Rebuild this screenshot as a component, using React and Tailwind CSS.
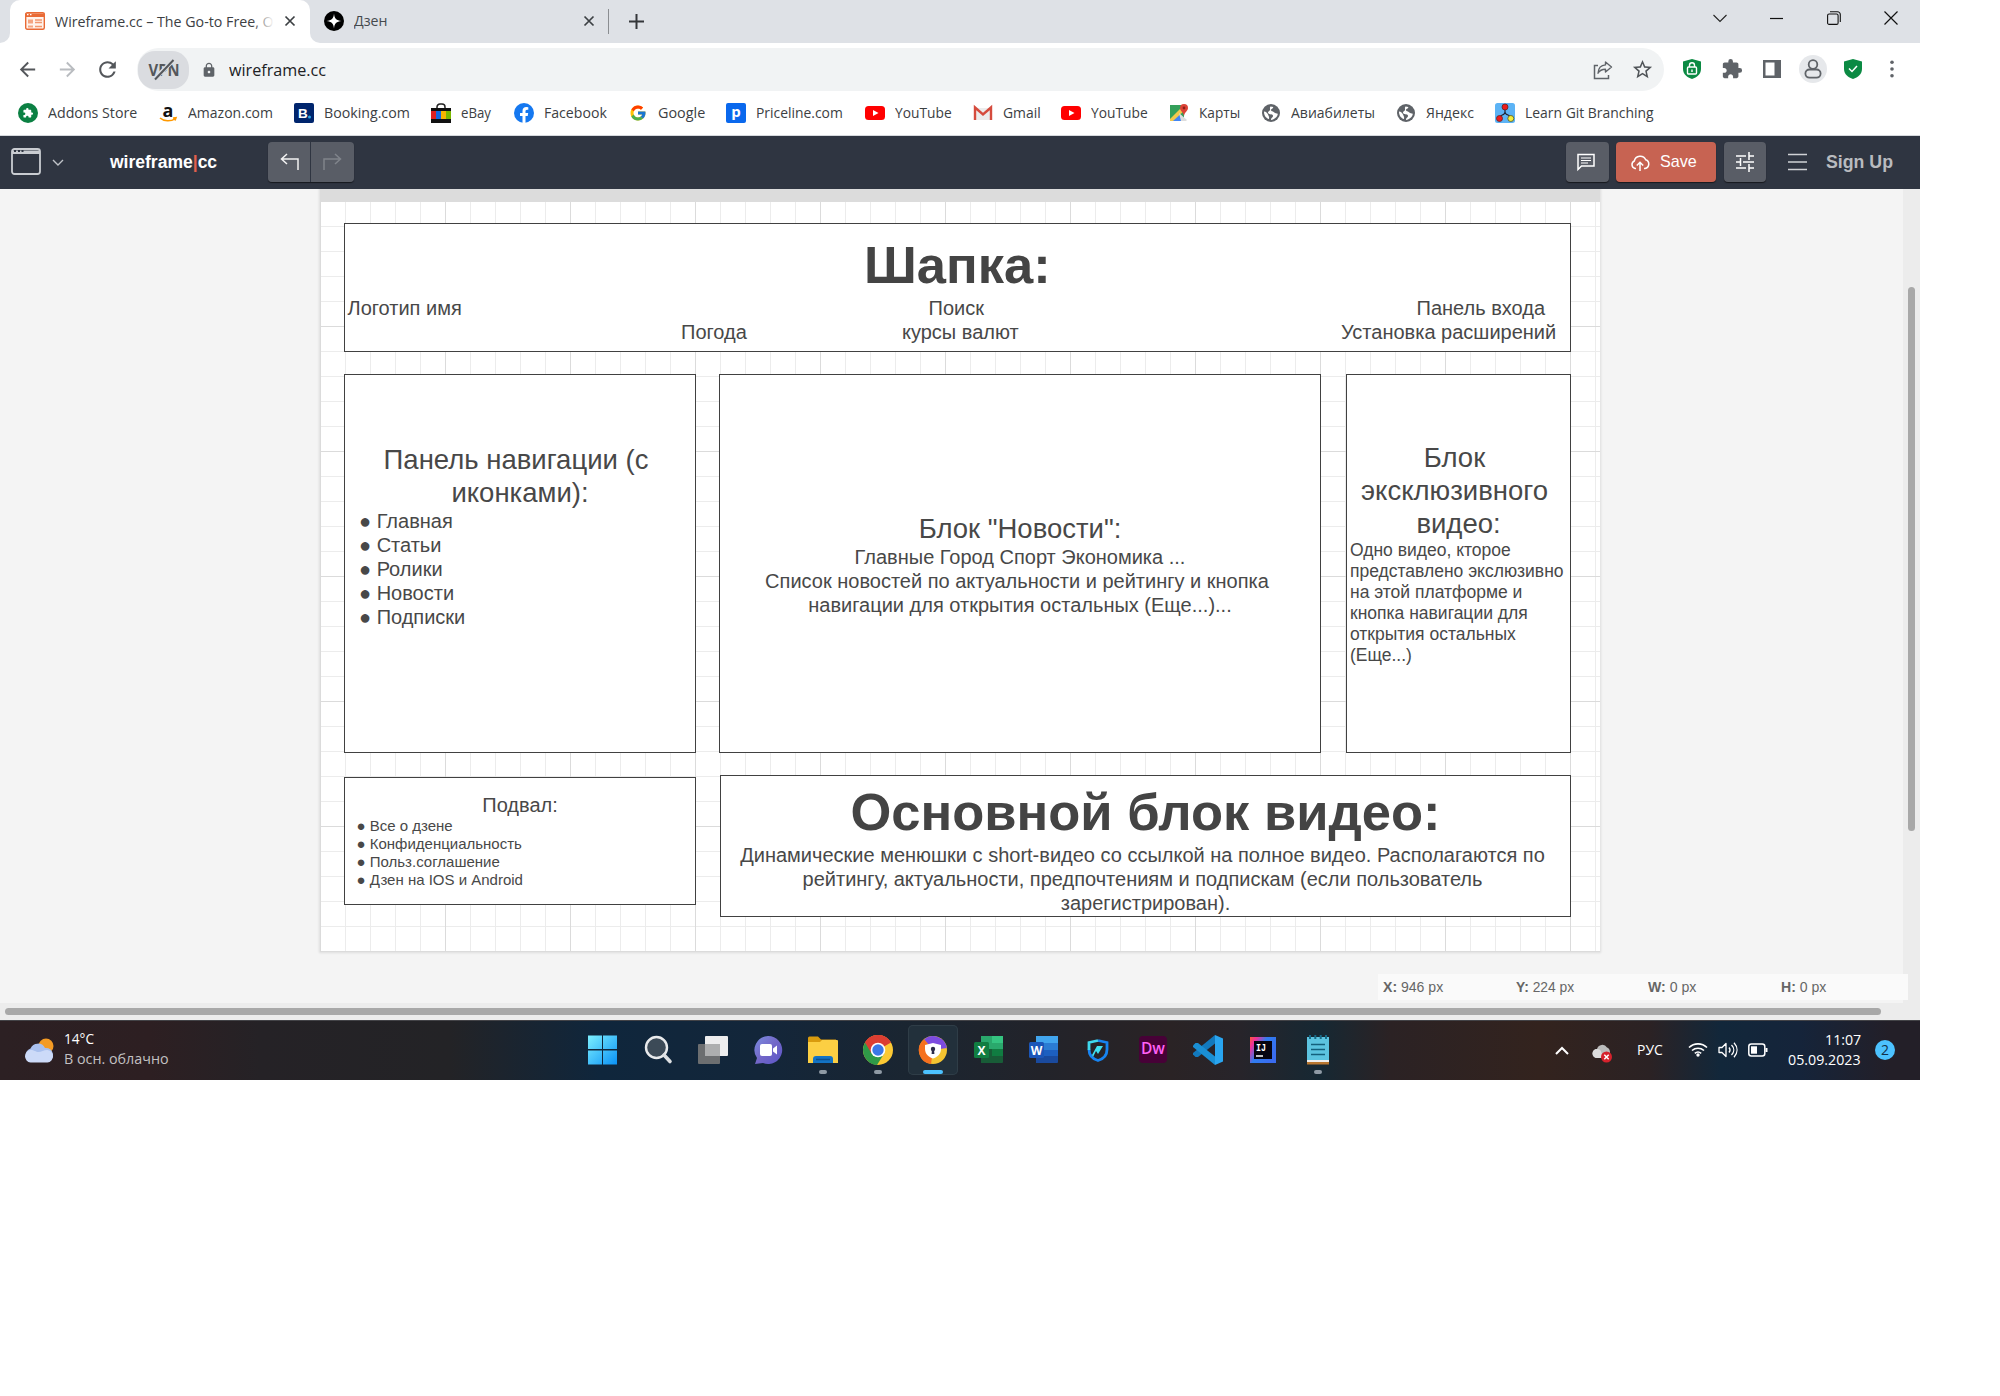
import React, { useLayoutEffect, useRef, useState } from "react";
import { FcGoogle } from "react-icons/fc";
import { MdExtension, MdLock, MdRefresh, MdStarBorder, MdArrowBack, MdArrowForward } from "react-icons/md";

function Fit({ w, className = "", children }) {
  const ref = useRef(null);
  const [scale, setScale] = useState(1);
  useLayoutEffect(() => {
    setScale(w / ref.current.offsetWidth);
  }, [w]);
  return (
    <span className={"block shrink-0 whitespace-nowrap " + className} style={{ width: w }}>
      <span ref={ref} className="inline-block origin-left" style={{ transform: `scaleX(${scale})` }}>
        {children}
      </span>
    </span>
  );
}

const Svg = ({ w = 20, h = 20, vb, className = "", children }) => (
  <svg width={w} height={h} viewBox={vb || `0 0 ${w} ${h}`} className={"block shrink-0 overflow-visible " + className} fill="none">
    {children}
  </svg>
);

const YouTube = () => (
  <Svg>
    <rect x="0" y="3" width="20" height="14" rx="3.5" fill="#f00" />
    <path d="M8 7l5.5 3L8 13z" fill="#fff" />
  </Svg>
);

const Globe = () => (
  <Svg>
    <circle cx="10" cy="10" r="9" fill="#5f6368" />
    <path d="M9.500 3.500c-1.500 2 .5 2.800-1 4.200S6.500 9 7.500 10.500s4.500.3 4.500 2.300-2 1.700-2 4.200C13.500 16.500 16.500 14 16.800 10.800 15.500 10 14.500 10.800 13 9.300s-2.500-.5-3-2 2.300-1.300 2.300-3.300z" fill="#fff" />
    <path d="M3 8.500c2 .2 3.500 1.500 4 3s1.500 2 1 4.500C5 15.500 2.800 12 3 8.500z" fill="#fff" />
  </Svg>
);

const bookmarks = [
  { w: 140, tw: 89, label: "Addons Store", icon: (
    <Svg><circle cx="10" cy="10" r="10" fill="#0b8043" /><g transform="translate(4.5 4.5) scale(.46)"><path d="M20.500 11H19V7c0-1.100-.9-2-2-2h-4V3.500a2.500 2.500 0 0 0-5 0V5H4c-1.100 0-2 .9-2 2v3.800h1.500a2.700 2.700 0 1 1 0 5.400H2V20c0 1.100.9 2 2 2h3.800v-1.500a2.700 2.700 0 1 1 5.400 0V22H17c1.100 0 2-.9 2-2v-4h1.500a2.500 2.500 0 0 0 0-5z" fill="#fff" /></g></Svg>) },
  { w: 136, tw: 85, label: "Amazon.com", icon: (
    <Svg><text x="10" y="13.500" textAnchor="middle" fontFamily="Open Sans" fontWeight="700" fontSize="18" fill="#111">a</text><path d="M2 15c4 3.600 11 3.600 15 .8M15 15l3-.3-1 2.800" stroke="#f90" strokeWidth="1.600" /></Svg>) },
  { w: 137, tw: 86, label: "Booking.com", icon: (
    <Svg><rect width="20" height="20" rx="2" fill="#00256d" /><text x="4" y="15" fontFamily="Liberation Sans" fontWeight="700" fontSize="13.500" fill="#fff">B</text><circle cx="15.500" cy="14" r="1.500" fill="#2aa8e8" /></Svg>) },
  { w: 83, tw: 30, label: "eBay", icon: (
    <Svg><path d="M6 6V4a3 3 0 0 1 3-3h2a3 3 0 0 1 3 3v2" stroke="#222" strokeWidth="1.500" /><rect y="5" width="20" height="3" fill="#111" /><rect y="8" width="5" height="8" fill="#e02020" /><rect x="5" y="8" width="5" height="8" fill="#1668e0" /><rect x="10" y="8" width="5" height="8" fill="#f7b500" /><rect x="15" y="8" width="5" height="8" fill="#7ab800" /><rect y="16" width="20" height="4" fill="#111" /></Svg>) },
  { w: 114, tw: 63, label: "Facebook", icon: (
    <Svg><circle cx="10" cy="10" r="10" fill="#1578f0" /><path d="M8.500 20v-7H6v-3h2.500V8c0-2.600 1.500-4 3.800-4l2 .2v2.500h-1.200c-1.200 0-1.600.8-1.600 1.500V10h2.700l-.5 3h-2.200v7z" fill="#fff" /></Svg>) },
  { w: 98, tw: 47, label: "Google", icon: <FcGoogle size={18} className="mx-px" /> },
  { w: 139, tw: 87, label: "Priceline.com", icon: (
    <Svg><rect width="20" height="20" rx="2" fill="#0a68ed" /><text x="10" y="13.500" textAnchor="middle" fontFamily="Open Sans" fontWeight="700" fontSize="15" fill="#fff">p</text></Svg>) },
  { w: 108, tw: 57, label: "YouTube", icon: <YouTube /> },
  { w: 88, tw: 38, label: "Gmail", icon: (
    <Svg><path d="M3 5h14v12H3z" fill="#ececec" /><path d="M2 17V4.500l8 7 8-7V17" stroke="#d54b3d" strokeWidth="2.400" /></Svg>) },
  { w: 108, tw: 57, label: "YouTube", icon: <YouTube /> },
  { w: 92, tw: 41, label: "Карты", icon: (
    <Svg><path d="M1 2h14v16H1z" fill="#34a05a" /><path d="M3 18L10 10l7 8z" fill="#4285f4" /><path d="M1 16L13 4l3 3L4 18H1z" fill="#f2c94c" /><path d="M10 10l8 7-1 1H12z" fill="#ddd" /><path d="M15 1a4 4 0 0 0-4 4c0 3 3.500 4 4 8 .5-4 4-5 4-8a4 4 0 0 0-4-4z" fill="#dc4437" /><circle cx="15" cy="5" r="1.400" fill="#8d2018" /></Svg>) },
  { w: 135, tw: 84, label: "Авиабилеты", icon: <Globe /> },
  { w: 99, tw: 48, label: "Яндекс", icon: <Globe /> },
  { w: 170, tw: 129, label: "Learn Git Branching", icon: (
    <Svg><rect width="20" height="20" rx="2.500" fill="#5cb3f5" /><path d="M10 5v5M4.500 15c0-4 5.500-2 5.500-6 0 4 6 2 6 6" stroke="#223" strokeWidth="1.200" /><circle cx="10" cy="4" r="3" fill="#ee1c1c" stroke="#622" strokeWidth=".8" /><circle cx="4.500" cy="15.500" r="3" fill="#ee1c1c" stroke="#622" strokeWidth=".8" /><circle cx="15.800" cy="15.500" r="3" fill="#f4ee3a" stroke="#552" strokeWidth=".8" /></Svg>) },
];

const Close = ({ className = "" }) => (
  <Svg w={12} h={12} className={className}><path d="M1.500 1.500l9 9M10.500 1.500l-9 9" stroke="#3c4043" strokeWidth="1.700" /></Svg>
);

function TabStrip() {
  return (
    <div className="flex h-[43px] items-stretch bg-[#dee1e6]">
      <div className="w-[10px] bg-white">
        <div className="h-full rounded-br-[10px] bg-[#dee1e6]" />
      </div>
      <div className="flex w-[300px] items-center rounded-t-[10px] bg-white pb-[2px] pl-[15px]">
        <Svg w={20} h={18} vb="0 0 20 18">
          <rect x=".7" y=".7" width="18.600" height="16.600" rx="1.500" fill="#fff3ec" stroke="#e96a35" strokeWidth="1.400" />
          <path d="M0 1.500h20V5H0z" fill="#e96a35" />
          <path d="M2 2.700h1.500M5 2.700h1.500" stroke="#fff" strokeWidth="1.200" />
          <path d="M3 7.500h5v4H3zM3 13.500h5v2H3z" fill="#f4a581" />
          <path d="M10 8h7M10 10.500h7M10 14.500h7" stroke="#f2976e" strokeWidth="1.300" />
        </Svg>
        <div className="relative ml-[10px]">
          <Fit w={219} className="text-[15px] leading-[20px] text-[#3c4043]">Wireframe.cc – The Go-to Free, O</Fit>
          <div className="absolute right-0 top-0 h-full w-[22px] bg-gradient-to-r from-white/0 to-white" />
        </div>
        <Close className="ml-[10px]" />
      </div>
      <div className="flex w-[298px] items-center">
        <div className="h-full w-[10px] shrink-0 bg-white"><div className="h-full rounded-bl-[10px] bg-[#dee1e6]" /></div>
        <Svg className="-mt-px ml-1">
          <circle cx="10" cy="10" r="10" fill="#000" />
          <path d="M10 2.500c.4 5 2.500 7.100 7.500 7.500-5 .4-7.100 2.500-7.500 7.500-.4-5-2.500-7.100-7.500-7.500 5-.4 7.100-2.500 7.500-7.500z" fill="#fff" />
        </Svg>
        <Fit w={33} className="-mt-[3px] ml-[10px] text-[15px] leading-[20px] text-[#45494d]">Дзен</Fit>
        <Close className="-mt-px ml-[196px]" />
      </div>
      <div className="my-[9px] w-px bg-[#8a8d91]" />
      <Svg w={15} h={15} className="ml-5 mt-[14px]"><path d="M7.500 0v15M0 7.500h15" stroke="#34373a" strokeWidth="2" /></Svg>
      <div className="ml-auto flex items-center gap-[43.500px] pb-[7px] pr-[22px]">
        <Svg w={14} h={14}><path d="M.5 4L7 10.500 13.500 4" stroke="#222" strokeWidth="1.100" /></Svg>
        <Svg w={13} h={14}><path d="M0 7.500h13" stroke="#111" strokeWidth="1.200" /></Svg>
        <Svg w={14} h={14}><rect x=".6" y="3" width="10.500" height="10.400" rx="1.500" stroke="#111" strokeWidth="1.100" /><path d="M3 .8h7.500a2.800 2.800 0 0 1 2.800 2.800V11" stroke="#111" strokeWidth="1.100" /></Svg>
        <Svg w={14} h={14}><path d="M.5.500l13 13M13.500.5l-13 13" stroke="#111" strokeWidth="1.200" /></Svg>
      </div>
    </div>
  );
}

const Shield = ({ children }) => (
  <Svg w={18} h={20}><path d="M9 0l9 2.500V10c0 5-4 8.500-9 10-5-1.500-9-5-9-10V2.500z" fill="#0b8a43" />{children}</Svg>
);

function Toolbar() {
  return (
    <div className="flex h-[48px] items-end bg-white">
      <div className="flex h-[43px] w-[137px] items-center pb-px pl-4 text-[#54575b]">
        <MdArrowBack size={23} />
        <MdArrowForward size={23} className="ml-[17px] text-[#b9bcc0]" />
        <MdRefresh size={25} className="ml-4" />
      </div>
      <div className="flex h-[43px] w-[1527px] items-center rounded-full bg-[#f1f3f4]">
        <div className="ml-px flex h-[38px] w-[51px] items-center justify-center rounded-[17px] bg-[#dadce0]">
          <Svg w={34} h={22}>
            <text x="1.500" y="17" textLength="31" lengthAdjust="spacingAndGlyphs" fontFamily="Open Sans" fontWeight="700" fontSize="15.500" fill="#54575b">VPN</text>
            <path d="M7.500 20L25.500 2" stroke="#dadce0" strokeWidth="4.500" />
            <path d="M8 20.500L26.500 1" stroke="#54575b" strokeWidth="2" />
          </Svg>
        </div>
        <MdLock size={16} className="ml-3 text-[#5f6368]" />
        <Fit w={97} className="ml-3 text-[17px] leading-[22px] text-[#202124]">wireframe.cc</Fit>
        <Svg w={20} h={20} className="ml-auto">
          <path d="M5 5.500H1.500v13h14V15" stroke="#5f6368" strokeWidth="1.500" />
          <path d="M12.500 2l6 5-6 5V9.200c-4 0-6 1.300-7.500 4 .3-4.500 2.700-8 7.500-8.300z" stroke="#5f6368" strokeWidth="1.400" strokeLinejoin="round" />
        </Svg>
        <MdStarBorder size={23} className="ml-[18px] mr-[10px] text-[#505458]" />
      </div>
      <div className="flex h-[43px] flex-1 items-center pb-[2px] pl-[19px]">
        <Shield><rect x="4.500" y="8" width="9" height="7" rx="1" stroke="#fff" strokeWidth="1.400" /><path d="M6.500 8V6.300a2.500 2.500 0 0 1 5 0V8M9 10.500v2.500" stroke="#fff" strokeWidth="1.400" /></Shield>
        <MdExtension size={22} className="ml-5 text-[#5f6368]" />
        <Svg w={18} h={18} className="ml-5"><path d="M0 0h18v18H0z" fill="#5f6368" /><path d="M2.500 2.500h9v13h-9z" fill="#fff" /></Svg>
        <div className="ml-[18px] flex h-7 w-7 items-center justify-center rounded-full bg-[#e6e8eb]">
          <Svg w={18} h={20}><circle cx="9" cy="5.500" r="4.300" stroke="#5f6368" strokeWidth="1.800" /><rect x="1.400" y="10.500" width="15.200" height="8.200" rx="4.100" stroke="#5f6368" strokeWidth="1.800" /></Svg>
        </div>
        <div className="ml-[17px]"><Shield><path d="M5 9.500l3 3L13 7" stroke="#fff" strokeWidth="1.500" /></Shield></div>
        <Svg w={4} h={18} className="ml-7"><circle cx="2" cy="2.200" r="1.800" fill="#5f6368" /><circle cx="2" cy="9" r="1.800" fill="#5f6368" /><circle cx="2" cy="15.800" r="1.800" fill="#5f6368" /></Svg>
      </div>
    </div>
  );
}

function Bookmarks() {
  return (
    <div className="flex h-[45px] items-center border-b border-[#d6d9dd] bg-white pl-[18px]">
      {bookmarks.map((b, i) => (
        <div key={i} className="flex shrink-0 items-center gap-[10px]" style={{ width: b.w }}>
          {b.icon}
          <Fit w={b.tw} className="-mt-[2px] text-[15px] leading-[20px] text-[#3c4043]">{b.label}</Fit>
        </div>
      ))}
    </div>
  );
}

function AppBar() {
  return (
    <div className="flex h-[53px] items-start bg-[#2f3541] pt-[6px] font-['Liberation_Sans',sans-serif]">
      <Svg w={30} h={27} className="ml-[11px] mt-[6px]">
        <rect x="1" y="1" width="28" height="25" rx="2.500" stroke="#c9ccd1" strokeWidth="1.800" />
        <path d="M1 2.500h28V6H1z" fill="#c9ccd1" /><path d="M3 3h2M7 3h2M10.500 3h2" stroke="#2f3541" strokeWidth="2" />
      </Svg>
      <Svg w={12} h={8} className="ml-[11px] mt-[17px]"><path d="M1 1l5 5 5-5" stroke="#c0c3c8" strokeWidth="1.400" /></Svg>
      <Fit w={107} className="ml-[46px] mt-[9px] text-[18px] font-bold leading-[22px] text-white">
        wireframe<span className="text-[#e2604c]">|</span>cc
      </Fit>
      <div className="ml-[51px] flex h-10 gap-px overflow-hidden rounded shadow-[0_1px_1px_#17191e]">
        <div className="flex w-[42px] items-center justify-center bg-[#595d66] pl-px">
          <Svg w={20} h={18}><path d="M7 1L1.500 6 7 11M1.500 6H18v11" stroke="#f2f2f2" strokeWidth="1.500" /></Svg>
        </div>
        <div className="flex w-[43px] items-center justify-center bg-[#595d66] pr-px">
          <Svg w={20} h={18}><path d="M13 1l5.500 5-5.500 5M18.500 6H2v11" stroke="#80848b" strokeWidth="1.500" /></Svg>
        </div>
      </div>
      <div className="ml-auto flex h-10 items-center text-white">
        <div className="flex h-10 w-[43px] items-center justify-center rounded bg-[#595d66] pr-1 shadow-[0_1px_1px_#17191e]">
          <Svg w={18} h={18}><path d="M1 1.500h16v11.500H4.500L1 16.500z" stroke="#fff" strokeWidth="1.500" /><path d="M4 5h10M4 7.500h10M4 10h7" stroke="#fff" strokeWidth="1.200" /></Svg>
        </div>
        <div className="ml-[7px] flex h-10 w-[100px] items-center rounded bg-[#c76352] pl-[14px] shadow-[0_1px_1px_#17191e]">
          <Svg w={20} h={17}><path d="M6 14.500H5A4 4 0 0 1 4.300 7a6 6 0 0 1 11.400-1.200A4.500 4.500 0 0 1 15 14.500h-1M10 17V8.500M6.800 11.500L10 8.300l3.200 3.200" stroke="#fff" strokeWidth="1.500" /></Svg>
          <Fit w={37} className="ml-[10px] text-[17px] leading-[22px]">Save</Fit>
        </div>
        <div className="ml-2 flex h-10 w-[42px] items-center justify-center rounded bg-[#595d66] shadow-[0_1px_1px_#17191e]">
          <Svg w={18} h={20}><path d="M0 4h10M13 4h5M13 0v8M0 10h4M4.500 6v8M7 10h11M0 16h10M13 16h5M13 12v8" stroke="#fff" strokeWidth="1.500" /></Svg>
        </div>
        <Svg w={19} h={18} className="ml-[22px]"><path d="M0 1.500h19M0 9h19M0 16.500h19" stroke="#d0d2d5" strokeWidth="1.700" /></Svg>
        <Fit w={67} className="ml-[19px] mr-[27px] text-[18px] font-bold leading-[22px] text-[#b9bbbf]">Sign Up</Fit>
      </div>
    </div>
  );
}

const box = "border border-[#414141] bg-white";

function Paper() {
  return (
    <div className="ml-[320px] h-[763px] w-[1280px] shadow-[0_0_2px_1px_#dddddd]">
      <div className="h-[13px] bg-[#dcdcdc]" />
      <div className="h-[750px] bg-white bg-[linear-gradient(to_right,#dbdbdb_1px,transparent_1px),linear-gradient(to_bottom,#dbdbdb_1px,transparent_1px),linear-gradient(to_right,#ececec_1px,transparent_1px),linear-gradient(to_bottom,#ececec_1px,transparent_1px)] bg-[size:125px_125px,125px_125px,25px_25px,25px_25px] bg-[position:0_0,0_-1px,0_0,0_-1px] pl-6 pt-[21px] text-[#484848]">
        <div className={box + " h-[129px] w-[1227px] pt-2 text-[20px] leading-[24px]"}>
          <div className="-mb-px pl-[519px] text-[52.500px] font-bold leading-[65px] text-[#444444]">Шапка:</div>
          <div className="grid grid-cols-[581px_488px_auto] pl-[2.500px]"><span>Логотип имя</span><span>Поиск</span><span>Панель входа</span></div>
          <div className="grid grid-cols-[221px_439px_auto] pl-[336px]"><span>Погода</span><span>курсы валют</span><span>Установка расширений</span></div>
        </div>
        <div className="mt-[22px] flex h-[379px]">
          <div className={box + " w-[352px] pt-[68px]"}>
            <div className="pr-2 text-center text-[27.500px] leading-[33px]">Панель навигации (с<br /><span className="pl-2">иконками):</span></div>
            <div className="pl-[14px] text-[20px] leading-[24px]">
              {["Главная", "Статьи", "Ролики", "Новости", "Подписки"].map((t) => <div key={t}>● {t}</div>)}
            </div>
          </div>
          <div className={box + " ml-[23px] w-[602px] pt-[137px] text-center text-[20px] leading-[24px]"}>
            <div className="text-[27.500px] leading-[33px]">Блок "Новости":</div>
            <div>Главные Город Спорт Экономика ...</div>
            <div className="pr-[6px]">Список новостей по актуальности и рейтингу и кнопка</div>
            <div>навигации для открытия остальных (Еще...)...</div>
          </div>
          <div className={box + " ml-[25px] w-[225px] pt-[66px]"}>
            <div className="pr-2 text-center text-[27.500px] leading-[33px]">Блок<br />эксклюзивного<br /><span className="pl-2">видео:</span></div>
            <div className="whitespace-nowrap pl-[3px] text-[17.500px] leading-[21px]">
              Одно видео, кторое<br />представлено экслюзивно<br />на этой платформе и<br />кнопка навигации для<br />открытия остальных<br />(Еще...)
            </div>
          </div>
        </div>
        <div className="mt-[22px] flex items-start">
          <div className={box + " mt-[2px] h-[128px] w-[352px] pt-[15px]"}>
            <div className="text-center text-[20px] leading-[24px]">Подвал:</div>
            <div className="pl-[11.500px] text-[15px] leading-[18px]">
              {["Все о дзене", "Конфиденциальность", "Польз.соглашение", "Дзен на IOS и Android"].map((t) => <div key={t}>● {t}</div>)}
            </div>
          </div>
          <div className={box + " ml-6 h-[142px] w-[851px] pt-[4px] text-center text-[20px] leading-[24px]"}>
            <div className="text-[52.500px] font-bold leading-[63px] text-[#444444]">Основной блок видео:</div>
            <div className="pr-[6px]">Динамические менюшки с short-видео со ссылкой на полное видео. Располагаются по</div>
            <div className="pr-[6px]">рейтингу, актуальности, предпочтениям и подпискам (если пользователь</div>
            <div>зарегистрирован).</div>
          </div>
        </div>
      </div>
    </div>
  );
}

function Workspace() {
  return (
    <div className="flex h-[831px] flex-col overflow-hidden bg-[#f4f4f4] font-['Liberation_Sans',sans-serif]">
      <div className="flex h-[814px]">
        <div className="flex w-[1903px] flex-col">
          <Paper />
          <div className="relative z-10 -mr-[5px] ml-[1378px] mt-[22px] flex h-[26px] items-center bg-[#fafafa] pb-px pl-[5px] text-[15px] text-[#666666]">
            {[["X:", "946 px", 60], ["Y:", "224 px", 58], ["W:", "0 px", 48], ["H:", "0 px", 45]].map(([k, v, w]) => (
              <div key={k} className="w-[132.500px] shrink-0 last:w-[45px]"><Fit w={w} className="leading-[20px]"><b>{k}</b> {v}</Fit></div>
            ))}
          </div>
        </div>
        <div className="w-[17px] bg-[#ececec] pl-[5px] pt-[98px]"><div className="h-[544px] w-[7px] rounded-full bg-[#a8a8a8]" /></div>
      </div>
      <div className="h-[17px] bg-[#ececec] pl-[5px] pt-[5px]"><div className="h-[7px] w-[1876px] rounded-full bg-[#a8a8a8]" /></div>
    </div>
  );
}

const apps = [
  { icon: <Svg w={30} h={30}><defs><linearGradient id="win" x1="0" y1="0" x2="1" y2="1"><stop stopColor="#7df0ff" /><stop offset="1" stopColor="#0a91f5" /></linearGradient></defs><path d="M0 .5h14v13.500H0zM15 .5h14v13.500H15zM0 15.500h14v14H0zM15 15.500h14v14H15z" fill="url(#win)" /></Svg> },
  { icon: <Svg w={30} h={30}><circle cx="13.500" cy="12.500" r="10.500" fill="#3c4a57" stroke="#e8eaec" strokeWidth="2.400" /><path d="M21 20l6 6.500" stroke="#dcdfe2" strokeWidth="3.600" strokeLinecap="round" /></Svg> },
  { icon: <Svg w={30} h={30}><rect x="7" y="1" width="23" height="20" rx="1" fill="#ededee" /><rect x="0" y="9" width="22" height="20" rx="1" fill="#6c6e70" /><path d="M7 9h15v12H7z" fill="#adaeaf" /></Svg> },
  { icon: <Svg w={30} h={30}><defs><linearGradient id="chat" x1="0" y1="0" x2="1" y2="1"><stop stopColor="#7b8de0" /><stop offset=".5" stopColor="#7367c8" /><stop offset="1" stopColor="#5a55c8" /></linearGradient></defs><path d="M15 1a14 14 0 1 1-5 27l-8 1 2-6A14 14 0 0 1 15 1z" fill="url(#chat)" /><rect x="7" y="9" width="12" height="12" rx="2" fill="#fff" /><path d="M20 13.500l4-3v9l-4-3z" fill="#fff" /></Svg> },
  { dot: true, icon: <Svg w={30} h={30}><path d="M0 3a1.500 1.500 0 0 1 1.500-1.500H10l3 3H28V12H0z" fill="#d99b0e" /><path d="M0 7h12l2-2h15a1 1 0 0 1 1 1v22H0z" fill="#fccf43" /><path d="M5 28v-4a3 3 0 0 1 3-3h14a3 3 0 0 1 3 3v4z" fill="#1373c4" /><path d="M8 24.500h14" stroke="#0b4f8f" strokeWidth="1.500" /></Svg> },
  { dot: true, icon: <Svg w={30} h={30}><circle cx="15" cy="15" r="15" fill="#fcc934" /><path d="M15 15L2 7.500A15 15 0 0 1 28 7.500z" fill="#dc3e32" /><path d="M2 7.500A15 15 0 0 0 14 30l7.500-12z" fill="#2f9a48" /><path d="M15 7.500h13A15 15 0 0 0 2 7.500l6.500 11z" fill="#dc3e32" /><circle cx="15" cy="15" r="7.300" fill="#fff" /><circle cx="15" cy="15" r="5.700" fill="#3b78e7" /></Svg> },
  { active: true, icon: <Svg w={30} h={30}><circle cx="15" cy="15" r="14" fill="#f5c531" /><path d="M15 15L6 4.500A14 14 0 0 1 28.900 13z" fill="#7c4be0" /><path d="M15 15l-2 14A14 14 0 0 1 6 4.200z" fill="#f5701f" /><path d="M15 8l8 2v4c0 5-4 8.500-8 9.500-4-1-8-4.500-8-9.500v-4z" fill="#fff" /><circle cx="15" cy="14" r="2.200" fill="#2b2b4a" /><path d="M14 14h2l.4 5h-2.800z" fill="#2b2b4a" /></Svg> },
  { icon: <Svg w={30} h={30}><path d="M8 1h22v13H8z" fill="#2aa86c" /><path d="M19 1h11v7H19z" fill="#35c481" /><path d="M8 14h22v13a1 1 0 0 1-1 1H8z" fill="#185c37" /><path d="M19 14h11v7H19z" fill="#107c41" /><rect x="1" y="7" width="15" height="16" rx="1.500" fill="#117d41" /><text x="8.500" y="19.500" textAnchor="middle" fontFamily="Open Sans" fontWeight="700" fontSize="12" fill="#fff">X</text></Svg> },
  { icon: <Svg w={30} h={30}><path d="M8 1h22v7H8z" fill="#41a5ee" /><path d="M8 8h22v7H8z" fill="#2b7cd3" /><path d="M8 15h22v6H8z" fill="#1d5fc0" /><path d="M8 21h22v6a1 1 0 0 1-1 1H8z" fill="#1a4a9e" /><rect x="1" y="7" width="15" height="16" rx="1.500" fill="#1c56b8" /><text x="8.500" y="19.500" textAnchor="middle" fontFamily="Open Sans" fontWeight="700" fontSize="12" fill="#fff">W</text></Svg> },
  { icon: <Svg w={30} h={30}><path d="M15 5.500l9 2v7c0 6-4 9.500-9 11-5-1.500-9-5-9-11" stroke="#1784f2" strokeWidth="2.800" /><path d="M6 15V7.500l9-2" stroke="#3fd9ee" strokeWidth="2.800" /><path d="M9 20l5-9 6 0-5 8-2-3-3 6z" fill="#3fe0f0" /></Svg> },
  { icon: <Svg w={30} h={30}><rect x="1" y="1" width="28" height="27" rx="4" fill="#470137" /><text x="15" y="18.500" textAnchor="middle" fontFamily="Open Sans" fontWeight="600" fontSize="16" fill="#ff61f6" textLength="24" lengthAdjust="spacingAndGlyphs">Dw</text></Svg> },
  { icon: <Svg w={30} h={30}><path d="M22 0v8.500L5 22 2.500 22 0 19.500V18z" fill="#1279bd" /><path d="M22 30v-8.500L5 8 2.500 8 0 10.500V12z" fill="#1a8fd4" /><path d="M22 0l8 3.500v23L22 30z" fill="#29a5f0" /></Svg> },
  { icon: <Svg w={30} h={30}><defs><linearGradient id="ij" x1="0" y1="0" x2="1" y2=".6"><stop stopColor="#fc5a3a" /><stop offset=".2" stopColor="#f0309a" /><stop offset=".5" stopColor="#2f7df0" /><stop offset="1" stopColor="#3a6cf0" /></linearGradient></defs><path d="M2 2h26v26H2z" fill="url(#ij)" /><path d="M6 6h18v18H6z" fill="#060410" /><text x="8" y="15.500" fontFamily="Liberation Mono" fontWeight="700" fontSize="10.500" fill="#fff" textLength="10" lengthAdjust="spacingAndGlyphs">IJ</text><path d="M8 21h7" stroke="#fff" strokeWidth="1.500" /></Svg> },
  { dot: true, icon: <Svg w={30} h={30}><path d="M4 26h22v3.500H4z" fill="#b8762f" /><path d="M4 2h22v23H4z" fill="#5cc4e0" /><path d="M4 25h22v2H4z" fill="#eee" /><path d="M7 0v4M12.300 0v4M17.700 0v4M23 0v4" stroke="#176a86" strokeWidth="2" /><path d="M8 9.500h14M8 14.500h14M8 19.500h14" stroke="#14607c" strokeWidth="1.700" /></Svg> },
];

function Taskbar() {
  return (
    <div className="flex h-[60px] items-stretch border-t border-[#434347] bg-[linear-gradient(to_right,#2c2023_0px,#2d1f22_150px,#252226_260px,#232326_450px,#0f263c_600px,#13263a_760px,#1b2530_920px,#22232a_1040px,#2a2325_1170px,#27242a_1240px,#162833_1320px,#2b2224_1390px,#33231e_1540px,#2b2224_1650px,#12273a_1720px,#15243a_1800px,#231f28_1890px)] font-['Open_Sans',sans-serif] text-[15px] text-white">
      <Svg w={30} h={26} className="ml-6 mt-4">
        <circle cx="22" cy="9" r="7.500" fill="#f49b24" />
        <path d="M8 25a7 7 0 0 1-1.500-13.500A8 8 0 0 1 21 11a7 7 0 0 1 2 14z" fill="#a9c0ee" />
        <path d="M6.500 25.500a6.300 6.300 0 0 1 0-12.500c4 0 5 2 8 2s5-2 9-2a6.300 6.300 0 0 1 0 12.500z" fill="#ccdaf8" />
      </Svg>
      <div className="ml-[10px] mt-[7px] w-[512px] shrink-0 leading-[20px]">
        <Fit w={30}>14°C</Fit>
        <Fit w={105} className="text-[#c3c1c2]">В осн. облачно</Fit>
      </div>
      <div className="flex shrink-0 items-start pt-1">
        {apps.map((a, i) => (
          <div key={i} className="w-[55px] shrink-0 px-[2px]">
            <div className={"flex h-[50px] w-[50px] flex-col items-center rounded-[5px] pt-[10px] " + (a.active ? "bg-[#22303b] ring-1 ring-inset ring-[#2f3d47]" : "")}>
              {a.icon}
              {a.dot && <div className="mt-[5px] h-1 w-2 rounded-full bg-[#8f9aa5]" />}
              {a.active && <div className="mt-[5px] h-1 w-5 rounded-full bg-[#4cc2ff]" />}
            </div>
          </div>
        ))}
      </div>
      <div className="ml-auto flex items-center pr-[25px]">
        <Svg w={14} h={9}><path d="M1 8l6-6 6 6" stroke="#fff" strokeWidth="2" /></Svg>
        <Svg w={20} h={20} className="ml-[23px] mt-1"><path d="M5 15a4.500 4.500 0 0 1 0-9A5.500 5.500 0 0 1 15 4.500c3 1 4 5 2 9z" fill="#bbb" /><path d="M5 15a4.500 4.500 0 0 1 0-9c4 0 5 3 5 9z" fill="#ddd" /><circle cx="14.500" cy="14" r="5.500" fill="#d6222c" /><path d="M12.300 11.800l4.400 4.400M16.700 11.800l-4.400 4.400" stroke="#fff" strokeWidth="1.500" /></Svg>
        <Fit w={26} className="-mt-[3px] ml-[25px] leading-[20px]">РУС</Fit>
        <Svg w={20} h={16} className="-mt-[3px] ml-[25px]"><path d="M1 6.500a13 13 0 0 1 18 0M4 9.500a9 9 0 0 1 12 0M6.800 12.300a5 5 0 0 1 6.400 0" stroke="#fff" strokeWidth="1.600" /><circle cx="10" cy="14" r="1.700" fill="#fff" /></Svg>
        <Svg w={20} h={18} className="-mt-[2px] ml-[10px]"><path d="M1 6.500h3l4-4v13l-4-4H1z" stroke="#fff" strokeWidth="1.300" strokeLinejoin="round" /><path d="M11 6.500c1.300 1.500 1.300 3.500 0 5M13.500 4c3 3 3 7 0 10M16 1.800c4 4.400 4 10 0 14.400" stroke="#fff" strokeWidth="1.300" /></Svg>
        <Svg w={20} h={14} className="-mt-px ml-[10px]"><rect x=".8" y="1" width="16" height="12" rx="2.500" stroke="#fff" strokeWidth="1.500" /><rect x="3" y="3.300" width="6" height="7.400" fill="#fff" /><path d="M18.500 5v4" stroke="#fff" strokeWidth="2" /></Svg>
        <div className="-mt-1 ml-5 flex flex-col items-end leading-[20px]">
          <Fit w={36}>11:07</Fit>
          <Fit w={73}>05.09.2023</Fit>
        </div>
        <div className="-mt-px ml-[14px] flex h-5 w-5 items-center justify-center rounded-full bg-[#4cc2ff] text-[14px] leading-none text-[#12304a]">2</div>
      </div>
    </div>
  );
}

export default function App() {
  return (
    <div className="min-h-[1396px] w-[2000px] bg-white font-['Open_Sans',sans-serif]">
      <div className="w-[1920px] overflow-hidden">
        <TabStrip />
        <Toolbar />
        <Bookmarks />
        <AppBar />
        <Workspace />
        <Taskbar />
      </div>
    </div>
  );
}
